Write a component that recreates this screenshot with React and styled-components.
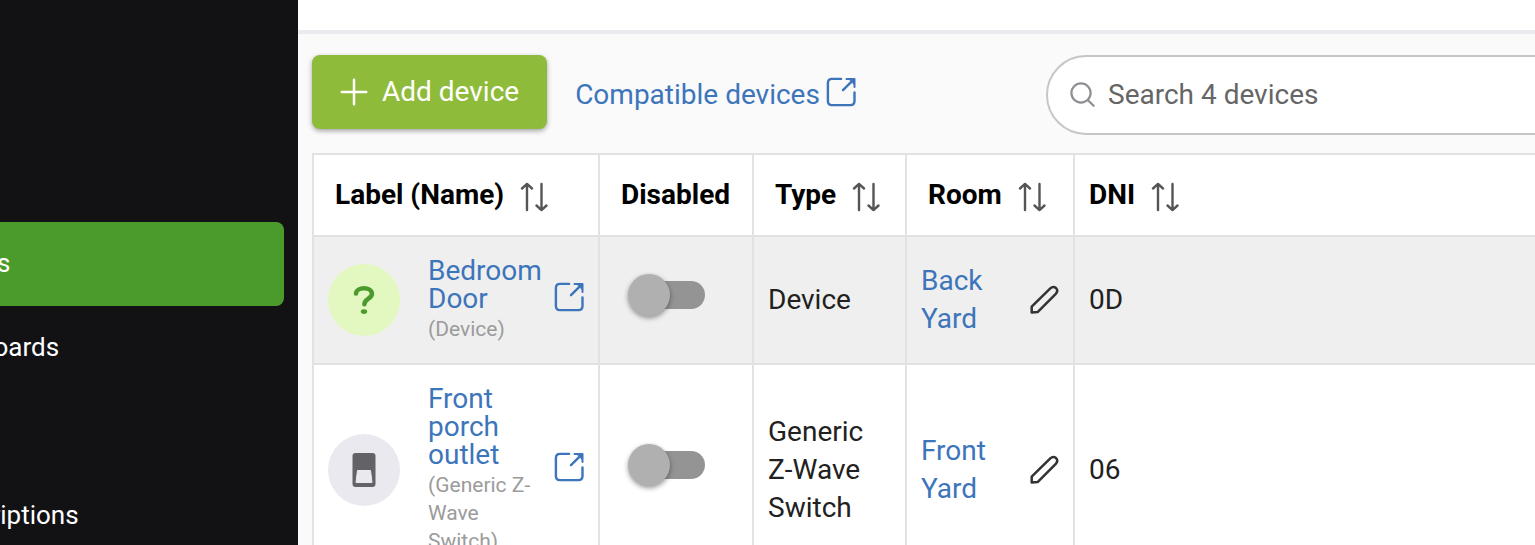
import React, { useState } from 'react';
import styled, { createGlobalStyle } from 'styled-components';

const navItems = [
  { id: 'devices', label: 'Devices', active: true },
  { id: 'dashboards', label: 'Dashboards' },
  { id: 'apps', label: '' },
  { id: 'subscriptions', label: 'Subscriptions' },
];

const columns = [
  { key: 'label', title: 'Label (Name)', width: 286, sortable: true },
  { key: 'disabled', title: 'Disabled', width: 154 },
  { key: 'type', title: 'Type', width: 153, sortable: true },
  { key: 'room', title: 'Room', width: 168, sortable: true },
  { key: 'dni', title: 'DNI', sortable: true, compact: true },
];

const devices = [
  { dni: '0D', label: 'Bedroom Door', name: 'Device', type: 'Device', room: 'Back Yard', icon: 'unknown' },
  { dni: '06', label: 'Front porch outlet', name: 'Generic Z-Wave Switch', type: 'Generic Z-Wave Switch', room: 'Front Yard', icon: 'switch' },
];

const PlusIcon = () => (
  <svg width="28" height="28" viewBox="0 0 28 28" fill="none" stroke="currentColor" strokeWidth="2.5" strokeLinecap="round" aria-hidden="true">
    <path d="M14 1.8v24.4M1.8 14h24.4" />
  </svg>
);

const OpenIcon = () => (
  <svg width="30" height="30" viewBox="0 0 30 30" fill="none" stroke="currentColor" strokeWidth="2.4" strokeLinecap="round" strokeLinejoin="round" aria-hidden="true">
    <path d="M15 1.9H6Q1.9 1.900 1.9 6v18q0 4.1 4.1 4.1h18.400q4.1 0 4.1-4.1v-8.500" />
    <path d="M17 13.200 27.600 2.600" />
    <path d="M20.500 2h8v8" strokeWidth="2" />
    <path d="M23.500 2.500h4.500v4.500z" fill="currentColor" strokeWidth="1" />
  </svg>
);

const SearchIcon = () => (
  <svg width="26" height="26" viewBox="0 0 26 26" fill="none" stroke="#8e8e93" strokeWidth="2.2" strokeLinecap="round" aria-hidden="true">
    <circle cx="11" cy="11" r="9.6" />
    <path d="m18 18.2 5.6 5.6" />
  </svg>
);

const SortIcon = () => (
  <svg width="28" height="30" viewBox="0 0 28 30" fill="none" stroke="#555" strokeWidth="2.4" strokeLinecap="round" strokeLinejoin="round" aria-hidden="true">
    <path d="M7 2v26M2 6.5l5-4.6 5 4.6M21.5 2v26M16.5 23.5l5 4.6 5-4.6" />
  </svg>
);

const PencilIcon = () => (
  <svg width="30" height="30" viewBox="0 0 30 30" fill="none" stroke="currentColor" strokeWidth="2.5" strokeLinejoin="round" aria-hidden="true">
    <path d="M2.7 27.5V21.6L21.3 3.4q2.8-2.7 5.7-.4 2.6 3-.2 5.8L8.6 27.1z" />
  </svg>
);

const QuestionIcon = () => (
  <svg width="22" height="30" viewBox="0 0 22 30" fill="none" stroke="#4b9a2c" strokeWidth="4.5" strokeLinecap="round" strokeLinejoin="round" aria-hidden="true">
    <path d="M3 8.6C3.4 1.7 18.6 1.2 19 8.8c0 5-7.6 4.8-7.6 10.4" />
    <ellipse cx="11" cy="26.6" rx="3.2" ry="2.4" fill="#4b9a2c" stroke="none" />
  </svg>
);

const SwitchIcon = () => (
  <svg width="24" height="36" viewBox="0 0 24 36" aria-hidden="true">
    <rect x="0.5" y="1" width="23" height="34" rx="3" fill="#636267" />
    <path d="M5.5 18.5h13l1.5 12h-16z" fill="#eae9ef" stroke="#eae9ef" strokeLinejoin="round" />
  </svg>
);

const DeviceRow = ({ device }) => {
  const [disabled, setDisabled] = useState(false);
  const unknown = device.icon === 'unknown';

  return (
    <Row>
      <Cell>
        <LabelCell>
          <Avatar $unknown={unknown}>{unknown ? <QuestionIcon /> : <SwitchIcon />}</Avatar>
          <Names>
            <DeviceLink href="#device">{device.label}</DeviceLink>
            <DeviceName>({device.name})</DeviceName>
          </Names>
          <IconLink href="#open" aria-label={`Open ${device.label}`}>
            <OpenIcon />
          </IconLink>
        </LabelCell>
      </Cell>
      <Cell>
        <SwitchWrapper>
          <Switch
            type="checkbox"
            aria-label={`Disable ${device.label}`}
            checked={disabled}
            onChange={(e) => setDisabled(e.target.checked)}
          />
        </SwitchWrapper>
      </Cell>
      <Cell>{device.type}</Cell>
      <Cell>
        <RoomCell>
          <Link href="#room">{device.room}</Link>
          <EditButton type="button" aria-label={`Edit room of ${device.label}`}>
            <PencilIcon />
          </EditButton>
        </RoomCell>
      </Cell>
      <Cell>{device.dni}</Cell>
    </Row>
  );
};

const App = () => {
  const [query, setQuery] = useState('');

  return (
    <>
      <GlobalStyle />
      <Page>
        <Sidebar>
          <NavList>
            {navItems.map((item) => (
              <NavItem key={item.id} href={`#${item.id}`} aria-label={item.id} $active={item.active}>
                {item.label}
              </NavItem>
            ))}
          </NavList>
        </Sidebar>
        <Main>
          <TopBar />
          <Toolbar>
            <AddButton type="button">
              <PlusIcon />
              Add device
            </AddButton>
            <CompatibleLink href="#compatible">
              Compatible devices
              <OpenIcon />
            </CompatibleLink>
            <SearchBox>
              <SearchIcon />
              <SearchInput
                type="text"
                aria-label="Search devices"
                placeholder="Search 4 devices"
                value={query}
                onChange={(e) => setQuery(e.target.value)}
              />
            </SearchBox>
          </Toolbar>
          <Table>
            <colgroup>
              {columns.map((column) => (
                <Column key={column.key} $width={column.width} />
              ))}
            </colgroup>
            <thead>
              <tr>
                {columns.map((column) => (
                  <HeadCell key={column.key} $compact={column.compact}>
                    {column.sortable ? (
                      <SortButton type="button">
                        {column.title}
                        <SortIcon />
                      </SortButton>
                    ) : (
                      column.title
                    )}
                  </HeadCell>
                ))}
              </tr>
            </thead>
            <tbody>
              {devices.map((device) => (
                <DeviceRow key={device.dni} device={device} />
              ))}
            </tbody>
          </Table>
        </Main>
      </Page>
    </>
  );
};

const GlobalStyle = createGlobalStyle`
  * {
    box-sizing: border-box;
  }

  body {
    margin: 0;
    font-family: Roboto, "Liberation Sans", sans-serif;
    font-size: 28px;
    line-height: 38px;
    color: #212121;
  }

  svg {
    display: block;
    flex-shrink: 0;
  }

  button,
  input {
    font: inherit;
  }
`;

const Page = styled.div`
  display: flex;
  height: 100vh;
  overflow: hidden;
`;

const Sidebar = styled.nav`
  flex: 0 0 298px;
  padding: 222px 14px 0 0;
  background: #121214;
  overflow: hidden;
`;

/* the menu is slid partly out of view on the left */
const NavList = styled.div`
  margin-left: -80px;
`;

const NavItem = styled.a`
  display: flex;
  align-items: center;
  height: 84px;
  padding-bottom: 2px;
  border-radius: 8px;
  background: ${(props) => (props.$active ? '#4b9a2c' : 'transparent')};
  color: #fff;
  font-size: 26px;
  text-decoration: none;
`;

const Main = styled.main`
  flex: 1;
  min-width: 0;
  background: #fafafa;
  overflow: hidden;
`;

const TopBar = styled.header`
  height: 34px;
  background: #fff;
  border-bottom: 4px solid #ebebef;
`;

/* toolbar and table run past the right edge of the window */
const Toolbar = styled.div`
  display: flex;
  align-items: flex-start;
  margin-right: -40px;
  padding: 21px 0 18px 14px;
`;

const AddButton = styled.button`
  display: flex;
  align-items: center;
  gap: 14px;
  height: 74px;
  padding: 0 28px;
  border: none;
  border-radius: 8px;
  background: #8fbb3a;
  color: #fff;
  box-shadow: 0 2px 5px rgba(0, 0, 0, 0.35);
  white-space: nowrap;
  cursor: pointer;
`;

const Link = styled.a`
  color: #3d75bb;
  text-decoration: none;
`;

const CompatibleLink = styled(Link)`
  display: flex;
  align-items: center;
  gap: 6px;
  height: 80px;
  margin-left: 28px;
  white-space: nowrap;

  svg {
    margin-bottom: 6px;
  }
`;

const SearchBox = styled.div`
  display: flex;
  align-items: center;
  gap: 12px;
  flex: 0 0 529px;
  height: 80px;
  margin-left: auto;
  padding: 0 22px;
  border: 2px solid #c6c6ca;
  border-radius: 40px;
  background: #fff;
`;

const SearchInput = styled.input`
  flex: 1;
  min-width: 0;
  padding: 0;
  border: none;
  outline: none;
  background: transparent;
  color: #212121;

  &::placeholder {
    color: #666;
    opacity: 1;
  }
`;

const Table = styled.table`
  width: calc(100% + 26px);
  margin-left: 14px;
  border-collapse: collapse;
  table-layout: fixed;
  background: #fff;
`;

const Column = styled.col`
  width: ${(props) => (props.$width ? `${props.$width}px` : 'auto')};
`;

const HeadCell = styled.th`
  height: 82px;
  padding: 0 0 0 ${(props) => (props.$compact ? '14px' : '21px')};
  border: 2px solid #e2e2e2;
  color: #000;
  font-weight: 700;
  text-align: left;
  white-space: nowrap;
`;

const SortButton = styled.button`
  display: flex;
  align-items: center;
  gap: 16px;
  padding: 0;
  border: none;
  background: none;
  color: inherit;
  cursor: pointer;

  svg {
    margin-top: 4px;
  }
`;

const Row = styled.tr`
  &:nth-child(odd) {
    background: #efefef;
  }
`;

const Cell = styled.td`
  padding: 20px 14px;
  border: 2px solid #e2e2e2;
  vertical-align: middle;
`;

const LabelCell = styled.div`
  display: flex;
  align-items: center;
`;

const Avatar = styled.span`
  display: flex;
  align-items: center;
  justify-content: center;
  flex: 0 0 72px;
  height: 72px;
  border-radius: 50%;
  background: ${(props) => (props.$unknown ? '#e2f8c0' : '#eae9ef')};
`;

const Names = styled.div`
  display: flex;
  flex: 1;
  flex-direction: column;
  gap: 2px;
  min-width: 0;
  padding-left: 28px;
  line-height: 28px;
`;

const DeviceLink = styled(Link)`
  display: block;
`;

const DeviceName = styled.span`
  color: #9b9b9b;
  font-size: 21px;
`;

const IconLink = styled(Link)`
  margin: -6px 0 0 12px;
`;

const SwitchWrapper = styled.div`
  padding: 0 0 10px 27px;
`;

const Switch = styled.input`
  display: flex;
  align-items: center;
  appearance: none;
  width: 64px;
  height: 28px;
  margin: 0;
  border-radius: 14px;
  background: #949494;
  cursor: pointer;

  &::before {
    content: '';
    flex: 0 0 42px;
    height: 42px;
    margin-left: -13px;
    border-radius: 50%;
    background: #b0b0b0;
    box-shadow: 0 2px 5px rgba(0, 0, 0, 0.4);
  }

  &:checked::before {
    margin-left: 35px;
  }
`;

const RoomCell = styled.div`
  display: flex;
  align-items: center;
  justify-content: space-between;
  gap: 14px;
`;

const EditButton = styled.button`
  padding: 0;
  border: none;
  background: none;
  color: #333;
  cursor: pointer;
`;

export default App;
